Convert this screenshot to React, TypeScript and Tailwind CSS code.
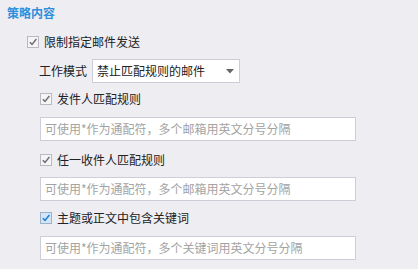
import React from "react";

function Check({ checked = true, blue = false }: { checked?: boolean; blue?: boolean }) {
  return (
    <span
      className={
        "flex h-[12px] w-[12px] shrink-0 items-center justify-center border " +
        (blue ? "border-[#9ab3cc] bg-[#d3e5f6]" : "border-[#b9b9c0] bg-[#f5f5f7]")
      }
    >
      {checked && (
        <svg width="10" height="10" viewBox="0 0 10 10">
          <path
            d="M1.8 5.2 L4 7.4 L8.4 2"
            fill="none"
            stroke={blue ? "#1f7bd6" : "#707070"}
            strokeWidth="1.5"
          />
        </svg>
      )}
    </span>
  );
}

function CheckRow({ label, blue = false, indent }: { label: string; blue?: boolean; indent: string }) {
  return (
    <div className={"flex h-[24px] items-center gap-[5px] " + indent}>
      <Check blue={blue} />
      <span className="text-[12px] leading-[16px] text-[#222]">{label}</span>
    </div>
  );
}

function Input({ placeholder, mt }: { placeholder: string; mt: string }) {
  return (
    <div
      className={
        "ml-[40px] flex h-[24px] w-[316px] items-center border border-[#cdcdd8] bg-white pl-[4px] " + mt
      }
    >
      <span className="text-[12px] leading-[16px] text-[#a3a3a3]">{placeholder}</span>
    </div>
  );
}

export default function App() {
  return (
    <div
      className="flex h-[269px] w-[418px] flex-col bg-[#eeedf2]"
      style={{ fontFamily: '"Noto Sans CJK SC", "Noto Sans", sans-serif' }}
    >
      <div className="flex h-[25px] items-center pl-[7px]">
        <span className="text-[12px] font-bold leading-[16px] text-[#2f8fdc]">策略内容</span>
      </div>
      <div className="mt-[5px]">
        <CheckRow label="限制指定邮件发送" indent="pl-[27px]" />
      </div>
      <div className="mt-[5px] flex h-[24px] items-center pl-[39px]">
        <span className="w-[53px] text-[12px] leading-[16px] text-[#222]">工作模式</span>
        <div className="flex h-[24px] w-[148px] items-center justify-between border border-[#cdcdd8] bg-white pl-[4px] pr-[5px]">
          <span className="text-[12px] leading-[16px] text-[#222]">禁止匹配规则的邮件</span>
          <svg width="8" height="5" viewBox="0 0 8 5">
            <path d="M0 0 L8 0 L4 4.5 Z" fill="#666" />
          </svg>
        </div>
      </div>
      <div className="mt-[4px]">
        <CheckRow label="发件人匹配规则" indent="pl-[40px]" />
      </div>
      <Input placeholder="可使用*作为通配符，多个邮箱用英文分号分隔" mt="mt-[6px]" />
      <div className="mt-[7px]">
        <CheckRow label="任一收件人匹配规则" indent="pl-[40px]" />
      </div>
      <Input placeholder="可使用*作为通配符，多个邮箱用英文分号分隔" mt="mt-[5px]" />
      <div className="mt-[5px]">
        <CheckRow label="主题或正文中包含关键词" blue indent="pl-[40px]" />
      </div>
      <Input placeholder="可使用*作为通配符，多个关键词用英文分号分隔" mt="mt-[6px]" />
    </div>
  );
}
